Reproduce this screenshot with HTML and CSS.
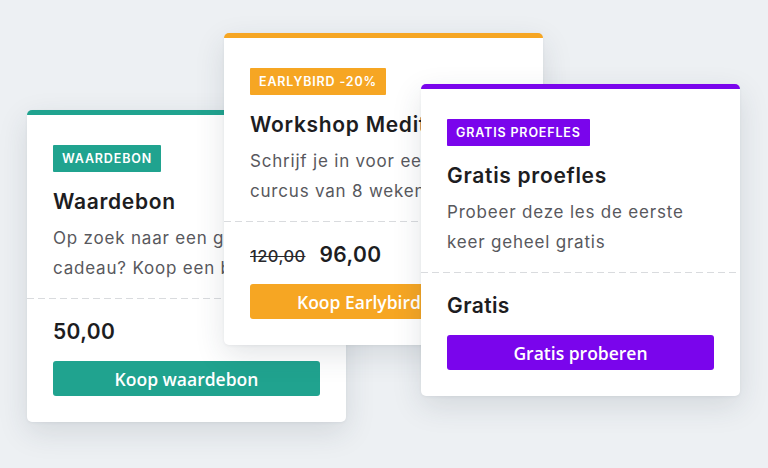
FILE: index.html
```html
<!DOCTYPE html>
<html lang="nl">
<head>
<meta charset="utf-8">
<title>Aanbiedingen</title>
<link rel="stylesheet" href="styles.css">
</head>
<body>
<div class="stage">
  <div class="card card-teal">
    <div class="card-top">
      <span class="badge">WAARDEBON</span>
      <h2 class="title">Waardebon</h2>
      <p class="desc">Op zoek naar een goed<br>cadeau? Koop een bon</p>
    </div>
    <div class="divider"></div>
    <div class="card-bottom">
      <div class="price"><span class="now">50,00</span></div>
      <button class="btn">Koop waardebon</button>
    </div>
  </div>

  <div class="card card-orange">
    <div class="card-top">
      <span class="badge">EARLYBIRD -20%</span>
      <h2 class="title">Workshop Meditatie</h2>
      <p class="desc">Schrijf je in voor een<br>curcus van 8 weken</p>
    </div>
    <div class="divider"></div>
    <div class="card-bottom">
      <div class="price"><span class="old">120,00</span><span class="now">96,00</span></div>
      <button class="btn btn-start">Koop Earlybird</button>
    </div>
  </div>

  <div class="card card-purple">
    <div class="card-top">
      <span class="badge">GRATIS PROEFLES</span>
      <h2 class="title">Gratis proefles</h2>
      <p class="desc">Probeer deze les de eerste<br>keer geheel gratis</p>
    </div>
    <div class="divider"></div>
    <div class="card-bottom">
      <div class="price"><span class="now">Gratis</span></div>
      <button class="btn">Gratis proberen</button>
    </div>
  </div>
</div>
</body>
</html>
```

FILE: styles.css
```css
* { box-sizing: border-box; }

html, body {
  margin: 0;
  padding: 0;
}

body {
  width: 768px;
  height: 468px;
  overflow: hidden;
  background: #edf0f3;
  font-family: Inter, "Open Sans", "DejaVu Sans", sans-serif;
  color: #1d1d1f;
}

.stage {
  display: grid;
  grid-template-columns: 768px;
  grid-template-rows: 468px;
}

.card {
  grid-area: 1 / 1;
  align-self: start;
  justify-self: start;
  width: 319px;
  background: #ffffff;
  border-radius: 5px;
  border-top: 5px solid var(--accent);
  box-shadow: 0 10px 30px rgba(40, 52, 70, 0.13), 0 1px 3px rgba(40, 52, 70, 0.06);
  overflow: hidden;
}

.card-teal { --accent: #20a38f; margin: 110px 0 0 27px; }
.card-orange { --accent: #f6a623; margin: 33px 0 0 224px; }
.card-purple { --accent: #7a05ec; margin: 84px 0 0 421px; }

.card-top {
  display: flex;
  flex-direction: column;
  align-items: flex-start;
  padding: 30px 26px 15px;
}

.badge {
  display: block;
  height: 27px;
  line-height: 27px;
  padding: 0 9px;
  background: var(--accent);
  color: #ffffff;
  font-size: 12.5px;
  font-weight: 600;
  letter-spacing: 0.85px;
  border-radius: 1px;
}

.title {
  margin: 16px 0 0;
  font-size: 21px;
  line-height: 28px;
  font-weight: 600;
  letter-spacing: 0.7px;
  white-space: nowrap;
  color: #1d1d1f;
}

.desc {
  margin: 7px 0 0;
  font-size: 17px;
  line-height: 30px;
  letter-spacing: 0.8px;
  color: #58585d;
  white-space: nowrap;
}

.divider {
  height: 1px;
  background: repeating-linear-gradient(90deg, #d9dbde 0 7px, transparent 7px 11px);
}

.card-bottom {
  padding: 19px 26px 26px;
}

.price {
  display: flex;
  align-items: baseline;
  gap: 14px;
  height: 28px;
  line-height: 28px;
}

.now {
  font-size: 21px;
  font-weight: 600;
  letter-spacing: 0.4px;
  color: #1d1d1f;
}

.old {
  font-size: 16.5px;
  font-weight: 500;
  color: #2a2a2e;
  text-decoration: line-through;
  letter-spacing: 0.4px;
}

.btn {
  display: block;
  width: 100%;
  height: 35px;
  margin-top: 15px;
  border: 0;
  border-radius: 3px;
  background: var(--accent);
  color: #ffffff;
  font-family: "Open Sans", sans-serif;
  font-size: 17.5px;
  font-weight: 600;
  white-space: nowrap;
  overflow: hidden;
}

.btn-start {
  text-align: left;
  padding-left: 47px;
}
```
